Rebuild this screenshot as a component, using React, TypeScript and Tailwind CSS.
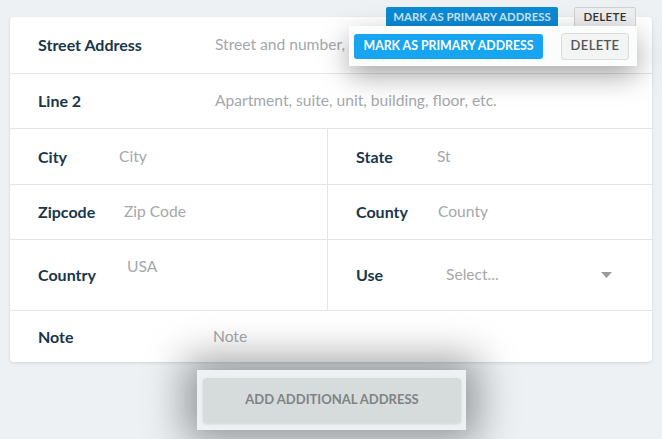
import { ReactNode } from "react";

const font = { fontFamily: "Lato, 'Open Sans', sans-serif" };

function Label({ children, w }: { children: ReactNode; w: string }) {
  return <div className={`${w} shrink-0 text-[16px] font-bold text-[#19364b]`}>{children}</div>;
}

function Placeholder({ children }: { children: ReactNode }) {
  return <div className="whitespace-nowrap text-[15.6px] text-[#a4a8ab]">{children}</div>;
}

export default function App() {
  return (
    <div className="relative h-[439px] w-[662px] overflow-hidden bg-[#edf1f4]" style={font}>
      <div className="px-[10px] pt-[17px]">
        <div className="overflow-hidden rounded-[4px] bg-white shadow-[0_1px_3px_rgba(0,0,0,0.12)]">
          <div className="flex h-[57px] items-center border-b border-[#e3e6e8] pl-[28px]">
            <Label w="w-[177px]">Street Address</Label>
            <Placeholder>Street and number,</Placeholder>
          </div>
          <div className="flex h-[55px] items-center border-b border-[#e3e6e8] pl-[28px]">
            <Label w="w-[177px]">Line 2</Label>
            <Placeholder>Apartment, suite, unit, building, floor, etc.</Placeholder>
          </div>
          <div className="grid h-[56px] grid-cols-[318px_1fr] border-b border-[#e3e6e8]">
            <div className="flex items-center border-r border-[#e3e6e8] pl-[28px]">
              <Label w="w-[81px]">City</Label>
              <Placeholder>City</Placeholder>
            </div>
            <div className="flex items-center pl-[28px]">
              <Label w="w-[81px]">State</Label>
              <Placeholder>St</Placeholder>
            </div>
          </div>
          <div className="grid h-[55px] grid-cols-[318px_1fr] border-b border-[#e3e6e8]">
            <div className="flex items-center border-r border-[#e3e6e8] pl-[28px]">
              <Label w="w-[86px]">Zipcode</Label>
              <Placeholder>Zip Code</Placeholder>
            </div>
            <div className="flex items-center pl-[28px]">
              <Label w="w-[82px]">County</Label>
              <Placeholder>County</Placeholder>
            </div>
          </div>
          <div className="grid h-[71px] grid-cols-[318px_1fr] border-b border-[#e3e6e8]">
            <div className="flex items-center border-r border-[#e3e6e8] pl-[28px]">
              <Label w="w-[89px]">Country</Label>
              <div className="-mt-[16px]">
                <Placeholder>USA</Placeholder>
              </div>
            </div>
            <div className="flex items-center pl-[28px] pr-[40px]">
              <Label w="w-[90px]">Use</Label>
              <div className="flex flex-1 items-center justify-between">
                <Placeholder>Select...</Placeholder>
                <svg width="11" height="6" viewBox="0 0 11 6">
                  <path d="M0 0h11L5.5 6z" fill="#9b9b9b" />
                </svg>
              </div>
            </div>
          </div>
          <div className="flex h-[51px] items-center pl-[28px]">
            <Label w="w-[175px]">Note</Label>
            <Placeholder>Note</Placeholder>
          </div>
        </div>
        <div className="flex justify-center pl-[5px] pt-[16px]">
          <div className="flex h-[45px] w-[258px] items-center justify-center rounded-[4px] bg-[#d6dbdc] text-[13px] font-bold text-[#7e8385]">
            ADD ADDITIONAL ADDRESS
          </div>
        </div>
      </div>

      {/* original action buttons sitting above the card */}
      <div className="absolute left-[386px] top-[7px] flex gap-[16px]">
        <div className="flex h-[20px] w-[172px] items-center justify-center rounded-[2px] bg-[#0c8ad5] text-[11.4px] font-bold text-[#c9e5f7]">
          MARK AS PRIMARY ADDRESS
        </div>
        <div className="flex h-[20px] w-[62px] items-center justify-center rounded-[2px] border border-[#cfd3d5] bg-[#eceeef] text-[11.5px] font-semibold tracking-wide text-[#333]">
          DELETE
        </div>
      </div>

      {/* highlighted copy of the action buttons */}
      <div className="absolute left-[349px] top-[26px] flex h-[40px] w-[288px] items-center justify-between bg-[#fbfcfc] pl-[5px] pr-[8px] shadow-[0_10px_28px_rgba(0,0,0,0.35)]">
        <div className="flex h-[25px] w-[189px] items-center justify-center rounded-[3px] bg-[#17a4f0] text-[12.3px] font-bold text-white">
          MARK AS PRIMARY ADDRESS
        </div>
        <div className="flex h-[27px] w-[68px] items-center justify-center rounded-[3px] border border-[#d9dcde] bg-[#f3f4f4] text-[13px] font-semibold tracking-wide text-[#555]">
          DELETE
        </div>
      </div>

      {/* highlighted copy of the add button */}
      <div className="absolute left-[197px] top-[370px] flex h-[60px] w-[269px] items-center justify-center bg-[#edf1f4] pl-[1px] shadow-[0_0_40px_12px_rgba(0,0,0,0.38)]">
        <div className="flex h-[45px] w-[258px] items-center justify-center rounded-[4px] bg-[#d6dbdc] text-[13px] font-bold text-[#7e8385] shadow-[0_1px_3px_rgba(0,0,0,0.12)]">
          ADD ADDITIONAL ADDRESS
        </div>
      </div>
    </div>
  );
}
